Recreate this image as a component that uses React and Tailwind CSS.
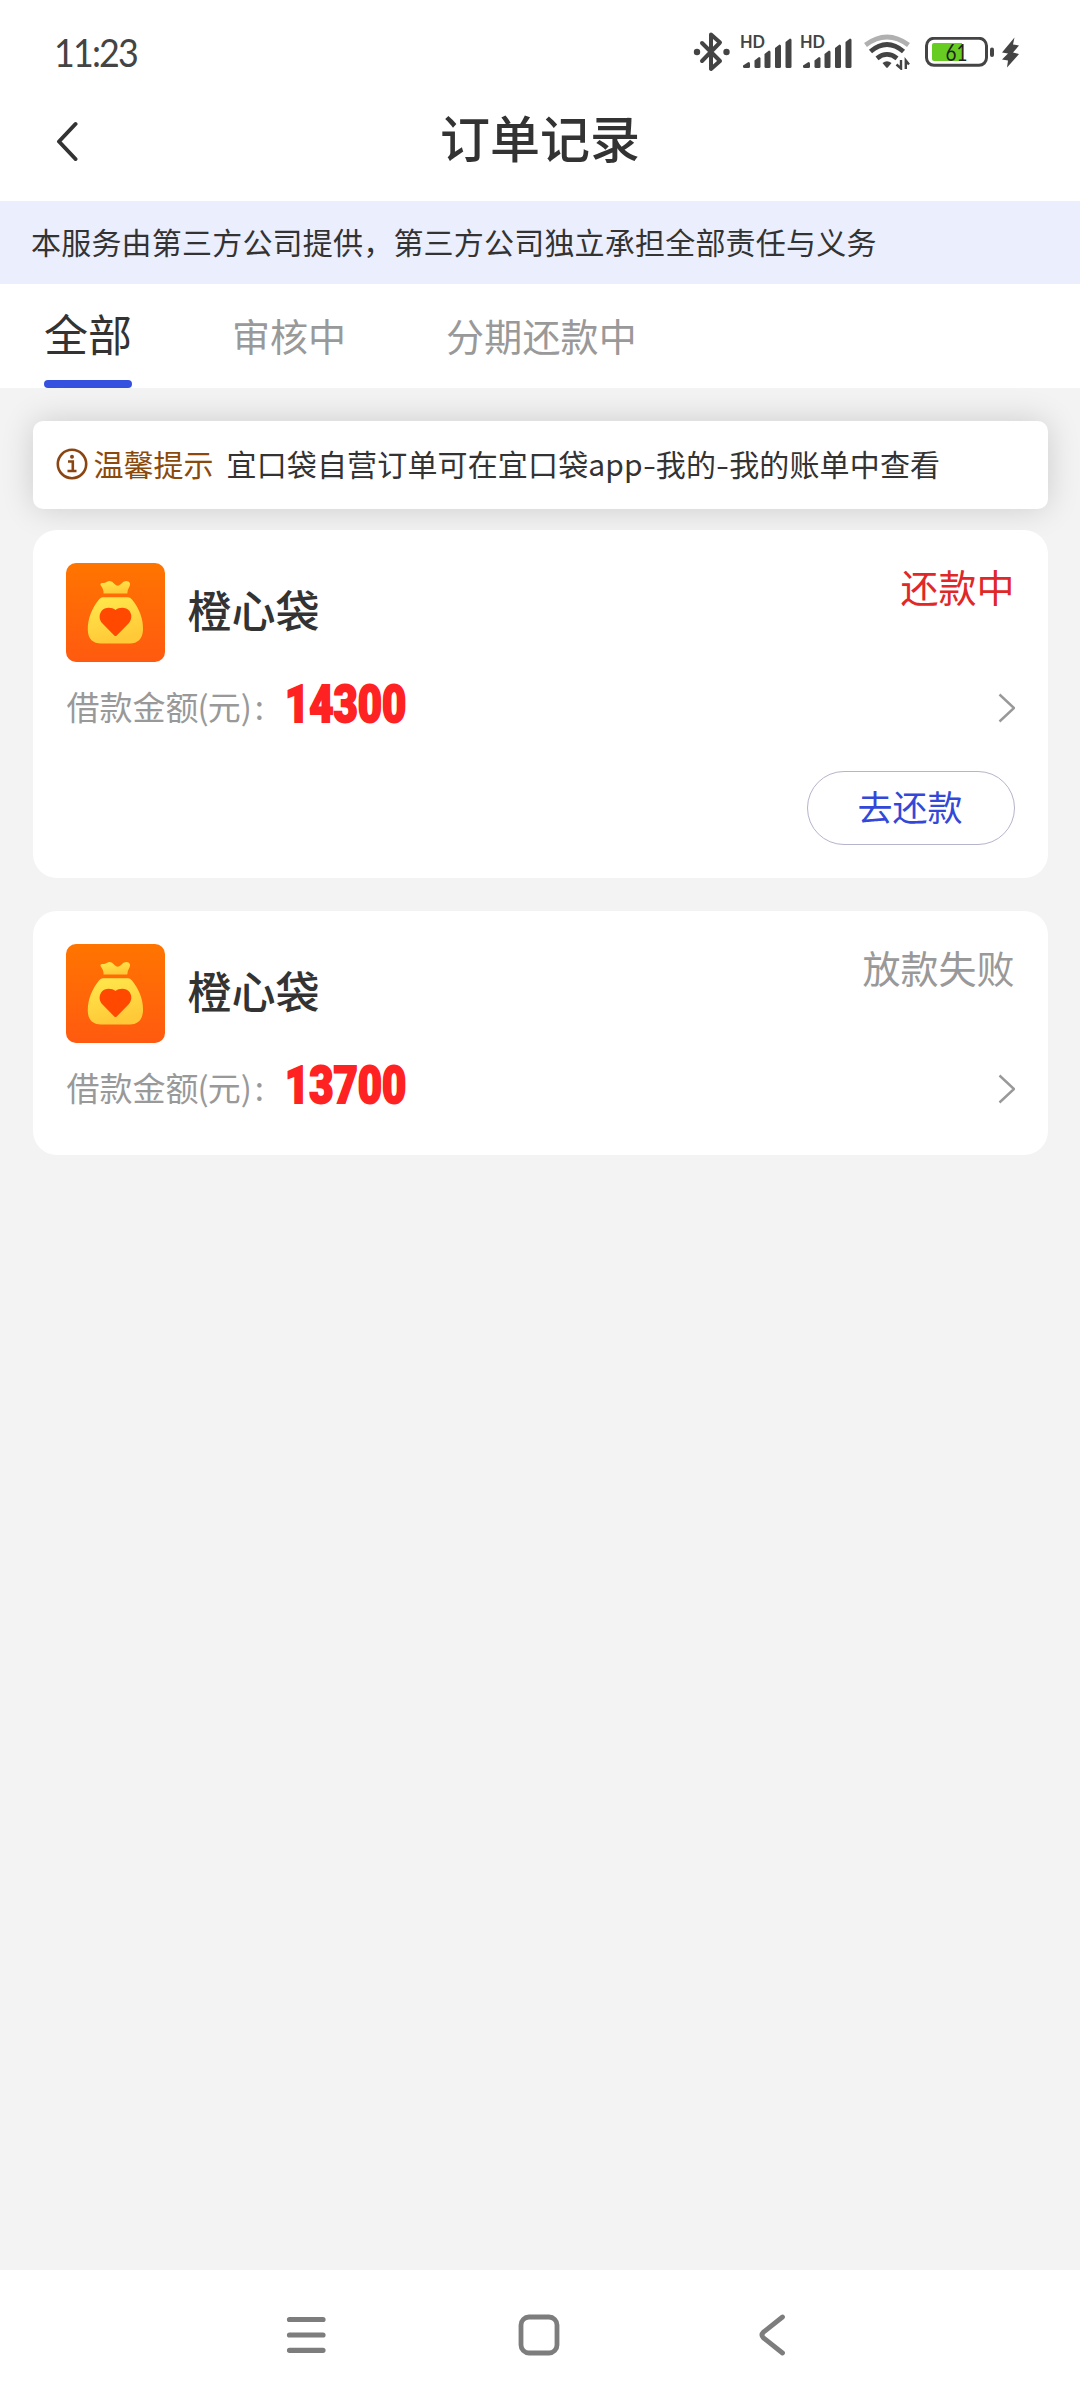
import React from "react";

const bars = [
  [0, 24, 30, 7],
  [11.5, 19, 30, 6],
  [21.5, 12.5, 30, 6],
  [32, 6.5, 30, 6],
  [42.5, 0.5, 30, 6],
];

function Bluetooth() {
  return (
    <svg width="38" height="40" viewBox="693 32 38 40" fill="none" stroke="#444" strokeWidth="4" strokeLinejoin="round" strokeLinecap="round">
      <path d="M702 43 L720 61 L711 69 V34.5 L720 42.500 L702 61" />
      <circle cx="697" cy="52" r="3.2" fill="#444" stroke="none" />
      <circle cx="726.500" cy="52" r="3.2" fill="#444" stroke="none" />
    </svg>
  );
}

function Signal() {
  return (
    <svg width="50" height="34" viewBox="-2 -3 50 34" className="overflow-visible">
      <text x="-3" y="10" fontSize="16.500" fontWeight="700" fill="#444" textLength="25" lengthAdjust="spacingAndGlyphs" fontFamily="Lato, sans-serif">HD</text>
      {bars.map(([x, top, bottom, w]) => (
        <path
          key={x}
          d={`M${x} ${bottom - 1.5} V${top + 3.5} L${x + w - 1.5} ${top} Q${x + w} ${top} ${x + w} ${top + 1.5} V${bottom - 1.5} Q${x + w} ${bottom} ${x + w - 1.5} ${bottom} H${x + 1.5} Q${x} ${bottom} ${x} ${bottom - 1.5} Z`}
          fill="#444"
        />
      ))}
    </svg>
  );
}

function Wifi() {
  return (
    <svg width="46" height="36" viewBox="864 35 46 36" fill="none" strokeWidth="4.800">
      <path d="M865.500 46 Q887 30 908.500 46" stroke="#b0b0b0" />
      <path d="M870.500 52.500 Q887 38.500 903.500 52.500" stroke="#444" />
      <path d="M877 59.300 Q887 51.500 897 59.300" stroke="#444" />
      <path d="M882.500 64 Q887 60.500 891.500 64 L888 68.300 Q887 69.300 886 68.300 Z" fill="#444" />
      <path d="M901 61 V69.500 L896.500 65.500 M905.800 70 V61.500 L909 65.500" stroke="#444" strokeWidth="2.400" />
    </svg>
  );
}

function Battery() {
  return (
    <svg width="70" height="30" viewBox="925 37 70 30">
      <rect x="926.500" y="38.300" width="60" height="27" rx="7.500" fill="#fff" stroke="#444" strokeWidth="3" />
      <path d="M934 43 H962 V61 H934 Q932 61 932 59 V45 Q932 43 934 43 Z" fill="#66cc22" />
      <rect x="990" y="47.500" width="4" height="9.500" rx="2" fill="#444" />
      <text x="945.500" y="60.500" fontSize="23" textLength="22" lengthAdjust="spacingAndGlyphs" fill="#222" fontFamily="Lato, sans-serif">61</text>
    </svg>
  );
}

function Bolt() {
  return (
    <svg width="19" height="31" viewBox="1000.500 36.500 19 31">
      <path d="M1014 37 L1001.500 52 L1007.500 53 L1001.500 59 L1007.500 60 L1006.500 67 L1018.500 53.500 L1012.500 52 L1018.500 45 L1012.500 44 Z" fill="#444" />
    </svg>
  );
}

function BagLogo() {
  return (
    <svg width="99" height="99" viewBox="0 0 99 99" className="block shrink-0 rounded-[10px]">
      <defs>
        <linearGradient id="tile" x1="0" y1="0" x2="0" y2="1">
          <stop offset="0" stopColor="#ff7500" />
          <stop offset="1" stopColor="#ff5a10" />
        </linearGradient>
        <linearGradient id="bag" x1="0" y1="0" x2="0.300" y2="1">
          <stop offset="0" stopColor="#ffe94d" />
          <stop offset="1" stopColor="#ffc938" />
        </linearGradient>
      </defs>
      <rect width="99" height="99" fill="url(#tile)" />
      <path d="M37.500 30.500 Q38 27 34.800 22.500 Q33.500 20.300 36.500 20 Q39 20.200 41 18.800 Q45 16.500 48.500 21 Q51.500 24.500 55 21 Q58.500 16.500 62.500 18.500 Q65 20 63.500 23.500 Q61 27.500 61.300 30.500 Z" fill="url(#bag)" />
      <path d="M37 34.200 H62 Q64 34.200 66 36.500 C73 45 77.500 56 77 67 C76.500 76 71.500 80.500 64 80.500 H35 C27 80.500 22 76 21.800 67 C21.500 56 26 45 33 36.500 Q35 34.200 37 34.200 Z" fill="url(#bag)" />
      <path d="M49.500 47 C53 44 60 43.500 63.500 48 C66.500 52.500 65.500 57 62.500 60.500 L50.500 72.700 Q49.500 73.500 48.500 72.700 L36.500 60.500 C33.300 57 32.500 52.500 35.500 48 C39 43.500 46 44 49.500 47 Z" fill="#ff4800" />
    </svg>
  );
}

function OrderCard({ status, statusClass, amount, children }) {
  return (
    <section className="w-[1015px] rounded-[24px] bg-white px-[33px] py-[33px]">
      <div className="flex h-[99px]">
        <BagLogo />
        <h2 className="ml-[23px] mt-[16px] text-[44px] leading-[60px] font-medium text-[#333]">橙心袋</h2>
        <span className={"ml-auto mt-[-2px] text-[38px] leading-[50px] " + statusClass}>{status}</span>
      </div>
      <div className="mt-[19px] flex h-[50px] items-center">
        <span className="flex w-[219px] whitespace-nowrap pl-px text-[33px] leading-[50px] text-[#999]">
          <span>借款金额</span>
          <span className="ml-[-1px]">(</span>
          <span className="ml-[-1px]">元</span>
          <span>)</span>
          <span className="ml-[3px]">:</span>
        </span>
        <span className="mt-[-2px] w-[124px] origin-left scale-x-[0.82] whitespace-nowrap font-[Roboto,sans-serif] text-[51px] leading-[50px] font-black text-[#ff2222] [-webkit-text-stroke:2px_#ff2222]">
          {amount}
        </span>
        <svg className="ml-auto mt-[3px]" width="18" height="30" viewBox="0 0 18 30" fill="none" stroke="#999" strokeWidth="2.400">
          <path d="M2.500 1.500 L17 15 L2.500 28.500" />
        </svg>
      </div>
      {children}
    </section>
  );
}

export default function App() {
  return (
    <div className="flex h-[2400px] w-[1080px] flex-col overflow-hidden bg-white font-['Noto_Sans_CJK_SC',sans-serif] text-[#333]">
      <div className="flex h-[104px] shrink-0 items-center pl-[54px] pr-[60px]">
        <span className="w-[90px] origin-left scale-x-[0.92] font-[Lato,sans-serif] text-[39px] leading-[50px] tracking-[-2px] text-[#444]">11:23</span>
        <div className="ml-auto flex items-center">
          <Bluetooth />
          <span className="ml-[10px]"><Signal /></span>
          <span className="ml-[10px]"><Signal /></span>
          <span className="ml-[13px]"><Wifi /></span>
          <span className="ml-[15px]"><Battery /></span>
          <span className="ml-[6px]"><Bolt /></span>
        </div>
      </div>

      <header className="grid h-[97px] shrink-0 grid-cols-[200px_1fr_200px] items-start">
        <svg className="ml-[55px] mt-[17px]" width="24" height="40" viewBox="0 0 24 40" fill="none" stroke="#333" strokeWidth="4" strokeLinecap="round" strokeLinejoin="round">
          <path d="M20.500 3 L4 20.500 L20.500 38" />
        </svg>
        <h1 className="mt-[-3px] text-center text-[50px] leading-[70px] font-medium">订单记录</h1>
      </header>

      <div className="h-[83px] shrink-0 bg-[#ebeefd] pl-[31px] text-[30px] leading-[80px] tracking-[0.200px] whitespace-nowrap">
        本服务由第三方公司提供，第三方公司独立承担全部责任与义务
      </div>

      <nav className="flex h-[104px] shrink-0 whitespace-nowrap text-[38px] leading-[102px] text-[#999]">
        <div className="ml-[44px] flex w-[88px] flex-col">
          <span className="h-[96px] text-[44px] leading-[99px] text-[#333]">全部</span>
          <span className="h-[8px] rounded-full bg-[#3650e0]" />
        </div>
        <span className="ml-[100px]">审核中</span>
        <span className="ml-[100px] tracking-[0.200px]">分期还款中</span>
      </nav>

      <main className="flex flex-1 flex-col items-center overflow-hidden bg-[#f3f3f3] pt-[33px]">
        <div className="flex h-[88px] w-[1015px] shrink-0 items-center rounded-[10px] bg-white pl-[23px] text-[30px] whitespace-nowrap shadow-[0_0_33px_rgba(0,0,0,0.16)]">
          <svg className="mb-[3px]" width="32" height="32" viewBox="0 0 32 32" fill="none" stroke="#8b4513" strokeWidth="2.600">
            <circle cx="16" cy="16" r="14.200" />
            <path d="M12 13.500 H16.800 V22.500 M11.500 23 H20.500" />
            <circle cx="16" cy="8.800" r="2" fill="#8b4513" stroke="none" />
          </svg>
          <span className="mb-[4px] ml-[6px] text-[#8b4a0b]">温馨提示</span>
          <span className="mb-[4px] ml-[13px] tracking-[0.150px]">
            宜口袋自营订单可在宜口袋app<span className="inline-block w-[13px] origin-left scale-x-[1.250]">-</span>我的<span className="inline-block w-[13px] origin-left scale-x-[1.250]">-</span>我的账单中查看
          </span>
        </div>

        <div className="mt-[21px] flex flex-col gap-[33px]">
          <OrderCard status="还款中" statusClass="text-[#e02828]" amount="14300">
            <div className="mt-[40px] flex justify-end">
              <button className="h-[74px] w-[208px] rounded-full border border-[#b4b4cc] pb-[5px] pr-[1px] text-[35px] leading-[66px] text-[#3348d8]">去还款</button>
            </div>
          </OrderCard>
          <OrderCard status="放款失败" statusClass="text-[#999]" amount="13700">
            <div className="h-[10px]" />
          </OrderCard>
        </div>
      </main>

      <footer className="flex h-[130px] shrink-0 items-center pl-[286px] text-[#7d7d7d]">
        <svg width="41" height="42" viewBox="0 0 41 42" fill="none" stroke="currentColor" strokeWidth="5.200" strokeLinecap="round">
          <path d="M3.500 5.500 H37 M3.500 21 H37 M3.500 36.300 H37" />
        </svg>
        <svg className="ml-[191px]" width="42" height="42" viewBox="0 0 42 42" fill="none" stroke="currentColor" strokeWidth="4.800">
          <rect x="3" y="3" width="36" height="36" rx="8" />
        </svg>
        <svg className="ml-[198px]" width="28" height="42" viewBox="0 0 28 42" fill="none" stroke="currentColor" strokeWidth="4.800" strokeLinecap="round">
          <path d="M24.500 3 L5.500 18 Q2.500 21 5.500 24 L24.500 39" />
        </svg>
      </footer>
    </div>
  );
}
